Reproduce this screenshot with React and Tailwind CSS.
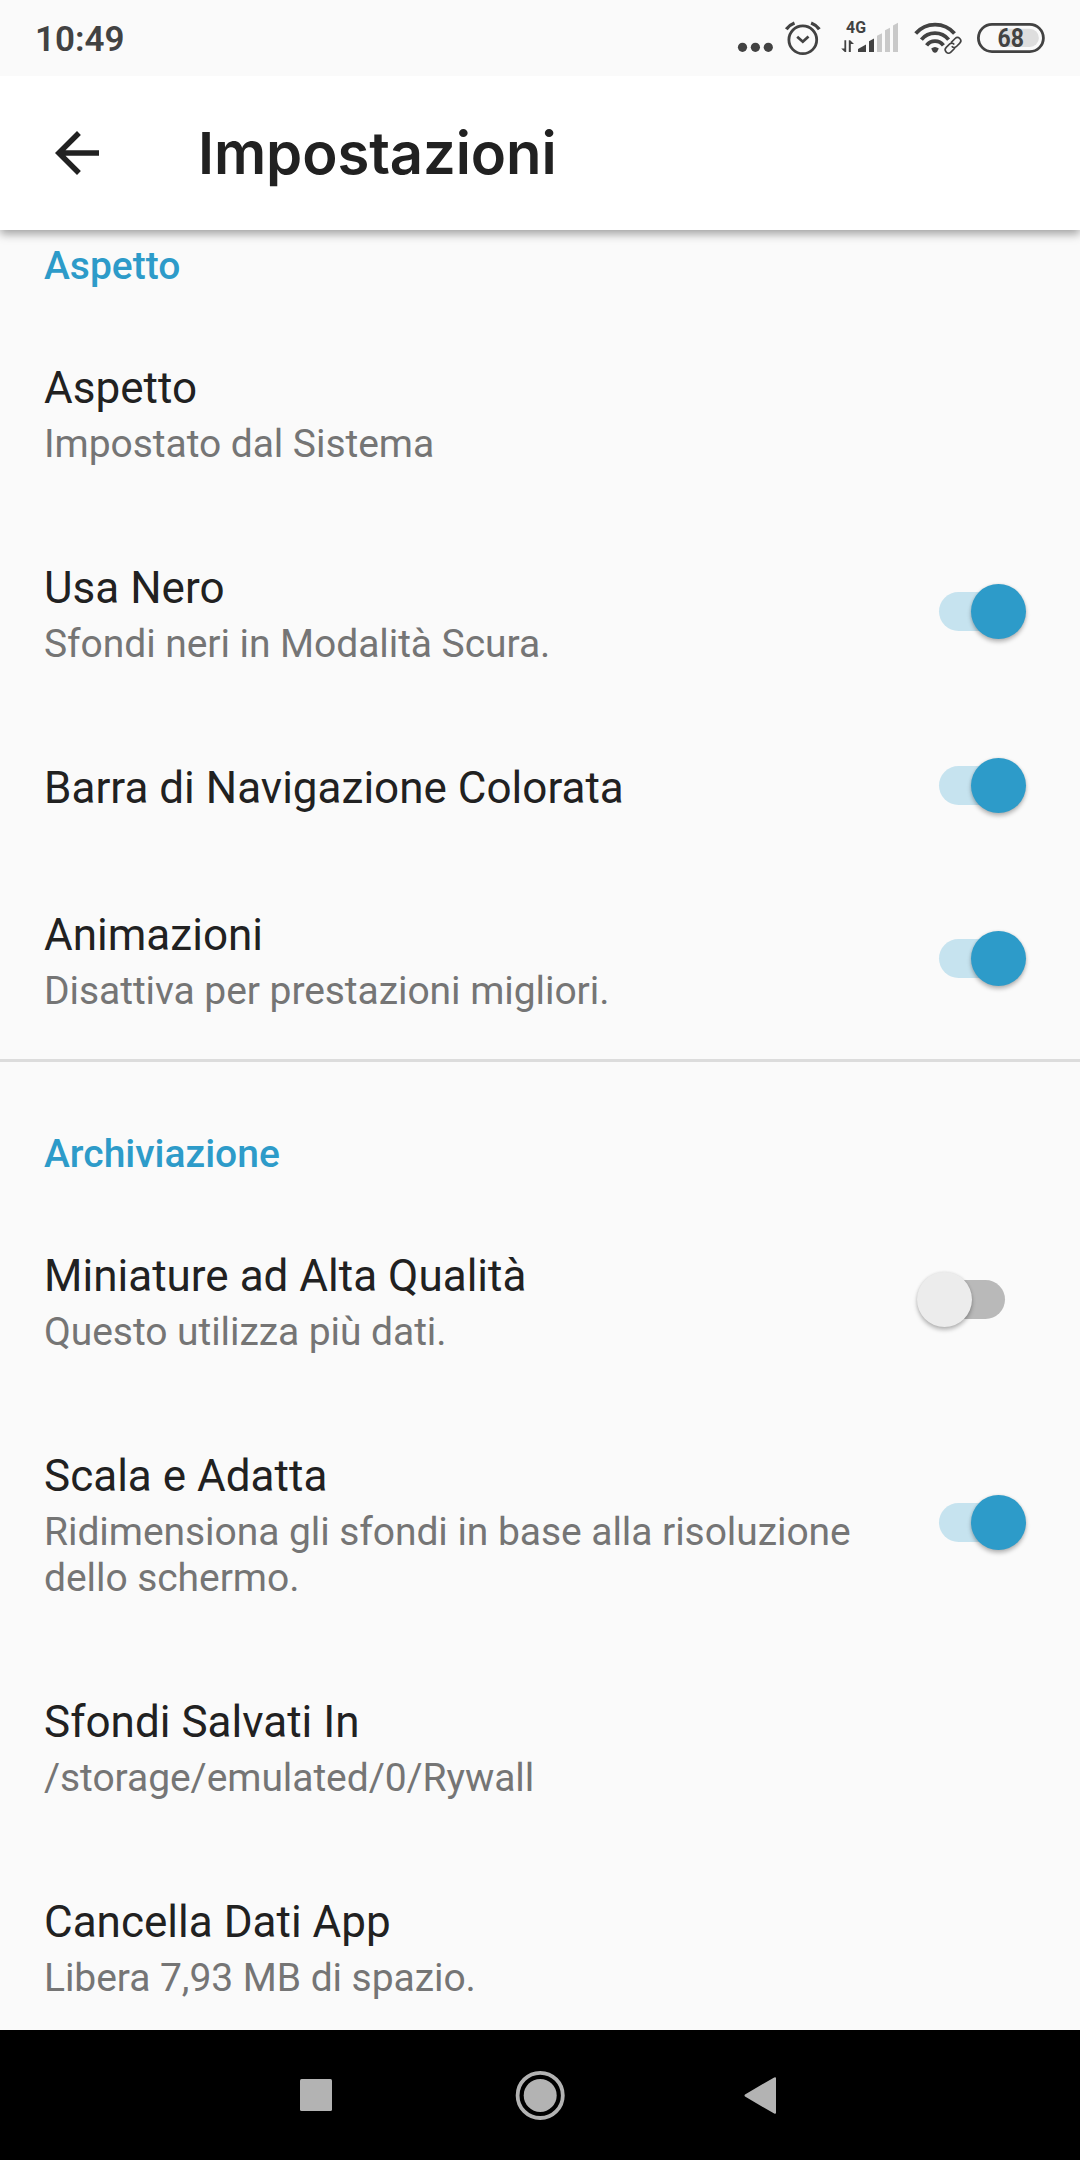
import { MdArrowBack } from "react-icons/md";
import clsx from "clsx";

const sections = [
  {
    title: "Aspetto",
    items: [
      { title: "Aspetto", summary: "Impostato dal Sistema" },
      { title: "Usa Nero", summary: "Sfondi neri in Modalità Scura.", checked: true },
      { title: "Barra di Navigazione Colorata", checked: true },
      { title: "Animazioni", summary: "Disattiva per prestazioni migliori.", checked: true },
    ],
  },
  {
    title: "Archiviazione",
    items: [
      { title: "Miniature ad Alta Qualità", summary: "Questo utilizza più dati.", checked: false },
      {
        title: "Scala e Adatta",
        summary: "Ridimensiona gli sfondi in base alla risoluzione dello schermo.",
        checked: true,
      },
      { title: "Sfondi Salvati In", summary: "/storage/emulated/0/Rywall" },
      { title: "Cancella Dati App", summary: "Libera 7,93 MB di spazio." },
    ],
  },
];

function StatusIcons() {
  return (
    <svg width="320" height="76" viewBox="730 0 320 76" fill="none" className="shrink-0">
      <g fill="#424242">
        <circle cx="742.5" cy="47.3" r="4.6" />
        <circle cx="755.4" cy="47.3" r="4.6" />
        <circle cx="768.3" cy="47.3" r="4.6" />
      </g>
      {/* alarm */}
      <g stroke="#424242" strokeWidth="2.8">
        <circle cx="802.8" cy="39.8" r="13.9" />
        <path d="M797.2 36.8l5.6 4.9 5.7-5.2" />
        <path d="M786.3 29.2q3-4.2 8.2-6.2M819.3 29.2q-3-4.2-8.2-6.2" strokeWidth="3.4" />
      </g>
      {/* mobile signal */}
      <text x="846" y="33.2" fontSize="16.2" fontWeight="700" fill="#424242" textLength="20" lengthAdjust="spacingAndGlyphs">
        4G
      </text>
      <path d="M844.4 40.3h1.8V52h-1.4l-3.6-3.6h3.2zM848.8 52V40.3h1.4l3.8 3.6h-3.2V52z" fill="#424242" />
      <path d="M858 52v-3l8-4.6V52zM869 52V41.3l5-2.7V52z" fill="#424242" />
      <path d="M877 52V35.8l5-2.5V52zM885 52V30.2l5-2.5V52zM893 52V25.4l5-2.6V52z" fill="#c9c9c9" />
      {/* wifi */}
      <g stroke="#424242" strokeWidth="3.8">
        <path d="M915.7 33.6a25.6 25.6 0 0 1 38.8 0" />
        <path d="M921.4 39.6a17.6 17.6 0 0 1 27.2 0" />
        <path d="M926.6 45.4a10.4 10.4 0 0 1 16.8 0" />
      </g>
      <path d="M931.2 48.6q3.8-3 7.6 0l-1.4 2.6q-2.4 3-4.8 0z" fill="#424242" />
      <g transform="rotate(-45 953 45.3)" stroke="#424242" strokeWidth="1.6">
        <path d="M952.5 48.6h-5.8a3.3 3.3 0 0 1 0-6.6h5a3.3 3.3 0 0 1 2.8 3.6" />
        <path d="M953.5 42h5.8a3.3 3.3 0 0 1 0 6.6h-5a3.3 3.3 0 0 1-2.8-3.6" />
      </g>
      {/* battery */}
      <path d="M1000 28.8h29.8a9.1 9.1 0 0 1 0 18.2H1000z" fill="#dedede" />
      <rect x="978.4" y="24.4" width="65" height="27.2" rx="13.6" stroke="#424242" strokeWidth="2.8" />
      <text x="997.6" y="47" fontSize="25.5" fontWeight="700" fill="#424242" textLength="26.4" lengthAdjust="spacingAndGlyphs">
        68
      </text>
    </svg>
  );
}

function Switch({ checked }) {
  return (
    <div
      className={clsx(
        "relative mr-[75px] mb-[5px] h-[39px] w-[66px] shrink-0 rounded-full",
        checked ? "bg-[#c6e3ef]" : "bg-[#b9b9b9]"
      )}
    >
      <div
        className={clsx(
          "absolute -top-2 size-[55px] rounded-full shadow-[0_3px_4px_rgba(0,0,0,0.26),0_0_3px_rgba(0,0,0,0.1)]",
          checked ? "left-8 bg-[#2d9bc9]" : "-left-[22px] bg-[#ececec]"
        )}
      />
    </div>
  );
}

function Preference({ title, summary, checked }) {
  return (
    <div className="flex shrink-0 items-center justify-between pl-11">
      <div className="w-[830px] py-[47.5px]">
        <div className="text-[44px] leading-[52px] tracking-[0.02px] text-[#212121]">{title}</div>
        {summary && (
          <div className="mt-[7px] text-[39px] leading-[46px] tracking-[-0.06px] text-[#757575]">{summary}</div>
        )}
      </div>
      {checked !== undefined && <Switch checked={checked} />}
    </div>
  );
}

function NavigationBar() {
  return (
    <nav className="flex h-[130px] shrink-0 items-center justify-center bg-black">
      <svg width="480" height="130" viewBox="300 2030 480 130" fill="#b3b3b3">
        <rect x="300" y="2079" width="32" height="32" rx="1.5" />
        <circle cx="540.2" cy="2095.4" r="16.5" />
        <circle cx="540.2" cy="2095.4" r="22.6" fill="none" stroke="#b3b3b3" strokeWidth="3.8" />
        <path d="M745 2094.4L774.2 2077.4q1.8-.8 1.8 1v34.2q0 1.8-1.8 1L745 2096.6q-1-1.100 0-2.200z" />
      </svg>
    </nav>
  );
}

export default function App() {
  return (
    <div className="flex h-[2160px] w-[1080px] flex-col overflow-hidden bg-[#fafafa] font-['Roboto',sans-serif]">
      <div className="z-20 flex h-[76px] shrink-0 items-center justify-between bg-[#fafafa] pr-[30px] pl-[35px] text-[#424242]">
        <span className="pt-[3px] text-[35px] leading-[73px] font-semibold">10:49</span>
        <StatusIcons />
      </div>
      <header className="z-10 flex h-[154px] shrink-0 items-center bg-white pl-11 text-[#212121] shadow-[0_4px_9px_rgba(0,0,0,0.36)]">
        <MdArrowBack className="size-[66px]" />
        <h1 className="ml-[88px] font-['Inter',sans-serif] text-[58px] leading-[70px] font-semibold tracking-[-0.1px]">
          Impostazioni
        </h1>
      </header>
      <main className="flex min-h-0 flex-1 flex-col overflow-hidden">
        {sections.map((section, index) => (
          <section
            key={section.title}
            className={clsx("flex shrink-0 flex-col", index > 0 && "-mt-0.5 border-t-3 border-[#dcdcdc] pt-[70px]")}
          >
            <h2
              className={clsx(
                "pb-[25px] pl-11 text-[39px] leading-[45px] font-medium text-[#2d9bc9]",
                index === 0 ? "mt-[14px]" : "mt-0"
              )}
            >
              {section.title}
            </h2>
            {section.items.map((item) => (
              <Preference key={item.title} {...item} />
            ))}
          </section>
        ))}
      </main>
      <NavigationBar />
    </div>
  );
}
